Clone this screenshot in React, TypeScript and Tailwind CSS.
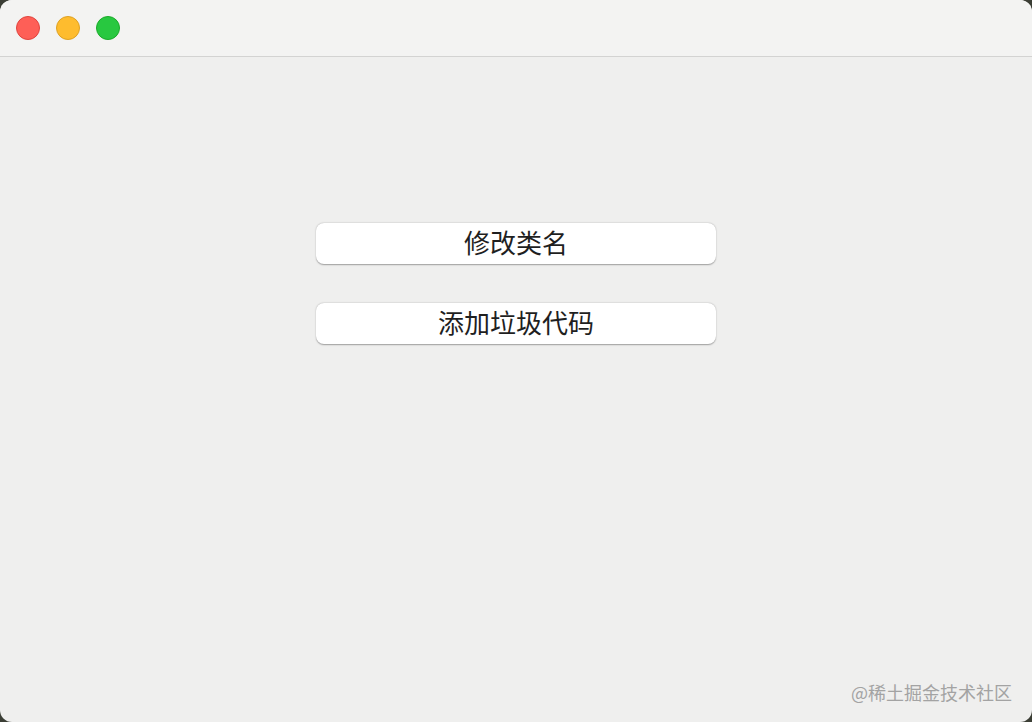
const font = { fontFamily: '"Noto Sans CJK SC", "Liberation Sans", sans-serif' };

function TrafficLights() {
  return (
    <div className="flex items-center gap-4 pl-4">
      <span className="h-6 w-6 rounded-full border border-[#e0443e] bg-[#fe5f57]" />
      <span className="h-6 w-6 rounded-full border border-[#dea123] bg-[#febc2e]" />
      <span className="h-6 w-6 rounded-full border border-[#1aab29] bg-[#28c840]" />
    </div>
  );
}

function ActionButton({ label }: { label: string }) {
  return (
    <button className="flex h-[41px] w-[400px] items-center justify-center rounded-lg bg-white pb-[3px] text-[26px] leading-none text-[#1f1f1f] shadow-[0_0.5px_1.5px_rgba(0,0,0,0.35)]">
      {label}
    </button>
  );
}

export default function App() {
  return (
    <div className="h-[722px] w-[1032px] bg-[#3b3e35]" style={font}>
      <div className="relative flex h-full w-full flex-col overflow-hidden rounded-[12px] bg-[#efefee]">
        <div className="flex h-[57px] shrink-0 items-center border-b border-[#d3d3d2] bg-[#f3f3f2]">
          <TrafficLights />
        </div>
        <div className="flex flex-1 flex-col items-center gap-[39px] pt-[166px]">
          <ActionButton label="修改类名" />
          <ActionButton label="添加垃圾代码" />
        </div>
        <div className="absolute bottom-[21px] right-[20px] text-[18px] leading-none text-[#a3a3a3]">
          @稀土掘金技术社区
        </div>
      </div>
    </div>
  );
}
